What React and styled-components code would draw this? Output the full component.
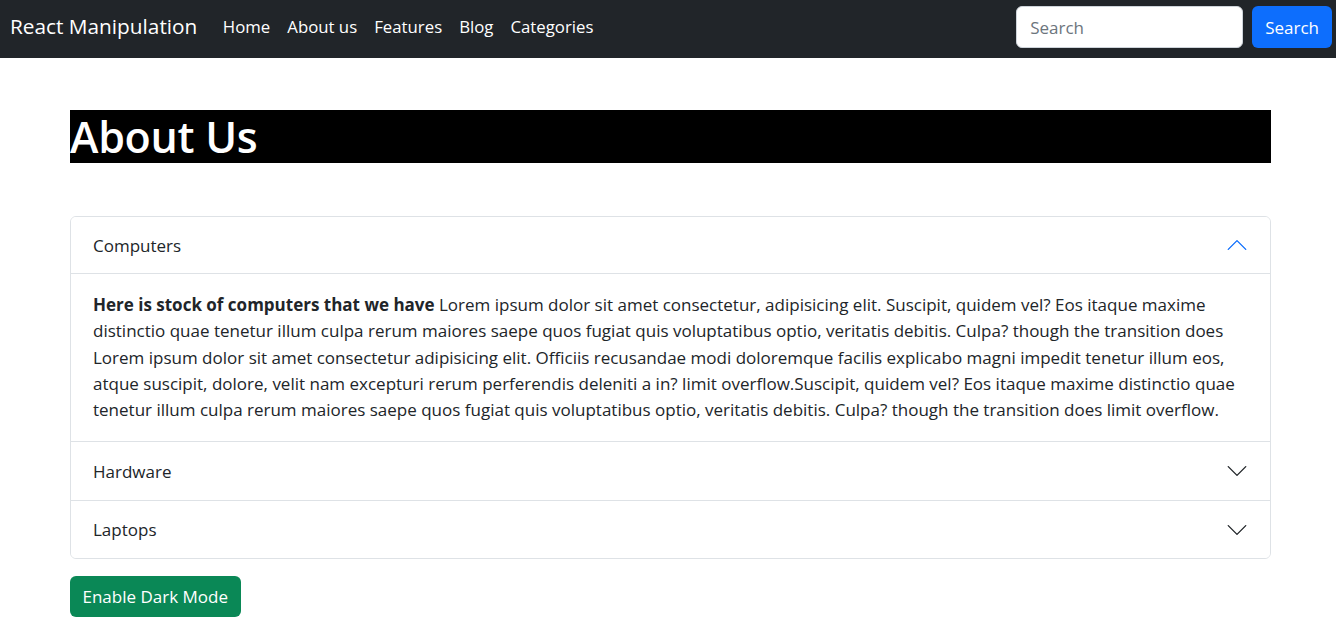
import React from "react";
import styled, { createGlobalStyle } from "styled-components";

const Global = createGlobalStyle`
  html, body { margin: 0; padding: 0; background: #fff; }
  body {
    font-family: "Open Sans", "Noto Sans", sans-serif;
    font-size: 17px;
    line-height: 1.5;
    color: #212529;
  }
  * { box-sizing: border-box; }
`;

const Navbar = styled.nav`
  height: 58px;
  background: #212529;
  display: flex;
  align-items: center;
  padding: 0 4px 4px 10px;
`;

const Brand = styled.a`
  color: #fff;
  font-size: 20.8px;
  margin-right: 17px;
  text-decoration: none;
  white-space: nowrap;
`;

const NavList = styled.div`
  display: flex;
  align-items: center;
  flex: 1;
`;

const NavLink = styled.a`
  color: #fff;
  font-size: 16.8px;
  padding: 0 8.5px;
  text-decoration: none;
  white-space: nowrap;
`;

const SearchForm = styled.form`
  display: flex;
  gap: 9px;
  align-items: center;
`;

const SearchInput = styled.input`
  width: 227px;
  height: 42px;
  border: 1px solid #ced4da;
  border-radius: 6px;
  padding: 0 13px;
  font-family: inherit;
  font-size: 17px;
  color: #212529;
  &::placeholder { color: #6c757d; }
`;

const Button = styled.button`
  height: ${(p) => p.$h || 42}px;
  border: none;
  border-radius: 6px;
  padding: 0 ${(p) => p.$px || 13}px;
  font-family: inherit;
  font-size: 17px;
  color: #fff;
  background: ${(p) => p.$bg};
  cursor: pointer;
`;

const Main = styled.main`
  margin: 52px 65px 0 70px;
`;

const Title = styled.h1`
  margin: 0 0 53px;
  background: #000;
  color: #fff;
  font-size: 43px;
  letter-spacing: -0.3px;
  font-weight: 600;
  line-height: 53px;
`;

const Accordion = styled.div`
  border: 1px solid #dee2e6;
  border-radius: 6px;
  overflow: hidden;
`;

const Item = styled.div`
  & + & { border-top: 1px solid #dee2e6; }
`;

const Header = styled.button`
  width: 100%;
  height: ${(p) => p.$h}px;
  display: flex;
  align-items: center;
  justify-content: space-between;
  padding: 0 23px 0 22px;
  background: #fff;
  border: none;
  border-bottom: ${(p) => (p.$open ? "1px solid #dee2e6" : "none")};
  font-family: inherit;
  font-size: 17px;
  color: #212529;
  text-align: left;
  cursor: pointer;
`;

const Chevron = styled.svg`
  width: 20px;
  height: 20px;
  transform: ${(p) => (p.$open ? "rotate(180deg)" : "none")};
`;

const Body = styled.div`
  padding: 18px 22px 18px 22px;
  font-size: 17px;
  line-height: 26.3px;
  & strong { font-weight: 700; }
`;

const Footer = styled.div`
  margin-top: 17px;
`;

const Icon = ({ open }) => (
  <Chevron $open={open} viewBox="0 0 16 16" fill="none" stroke={open ? "#0d6efd" : "#212529"} strokeLinecap="round" strokeLinejoin="round" strokeWidth="1.1">
    <path d="M1 4.5L8 11.5L15 4.5" />
  </Chevron>
);

const items = [
  { title: "Computers", open: true, h: 57 },
  { title: "Hardware", h: 58 },
  { title: "Laptops", h: 57 },
];

export default function App() {
  return (
    <>
      <Global />
      <Navbar>
        <Brand href="#">React Manipulation</Brand>
        <NavList>
          <NavLink href="#">Home</NavLink>
          <NavLink href="#">About us</NavLink>
          <NavLink href="#">Features</NavLink>
          <NavLink href="#">Blog</NavLink>
          <NavLink href="#">Categories</NavLink>
        </NavList>
        <SearchForm onSubmit={(e) => e.preventDefault()}>
          <SearchInput placeholder="Search" />
          <Button $bg="#0d6efd" type="submit">Search</Button>
        </SearchForm>
      </Navbar>
      <Main>
        <Title>About Us</Title>
        <Accordion>
          {items.map((it) => (
            <Item key={it.title}>
              <Header $open={it.open} $h={it.h}>
                {it.title}
                <Icon open={it.open} />
              </Header>
              {it.open && (
                <Body>
                  <strong>Here is stock of computers that we have</strong> Lorem ipsum dolor sit amet consectetur, adipisicing elit. Suscipit, quidem vel? Eos itaque maxime distinctio quae tenetur illum culpa rerum maiores saepe quos fugiat quis voluptatibus optio, veritatis debitis. Culpa? though the transition does Lorem ipsum dolor sit amet consectetur adipisicing elit. Officiis recusandae modi doloremque facilis explicabo magni impedit tenetur illum eos, atque suscipit, dolore, velit nam excepturi rerum perferendis deleniti a in? limit overflow.Suscipit, quidem vel? Eos itaque maxime distinctio quae tenetur illum culpa rerum maiores saepe quos fugiat quis voluptatibus optio, veritatis debitis. Culpa? though the transition does limit overflow.
                </Body>
              )}
            </Item>
          ))}
        </Accordion>
        <Footer>
          <Button $bg="#0a8856" $h={41} $px={12.5}>Enable Dark Mode</Button>
        </Footer>
      </Main>
    </>
  );
}
